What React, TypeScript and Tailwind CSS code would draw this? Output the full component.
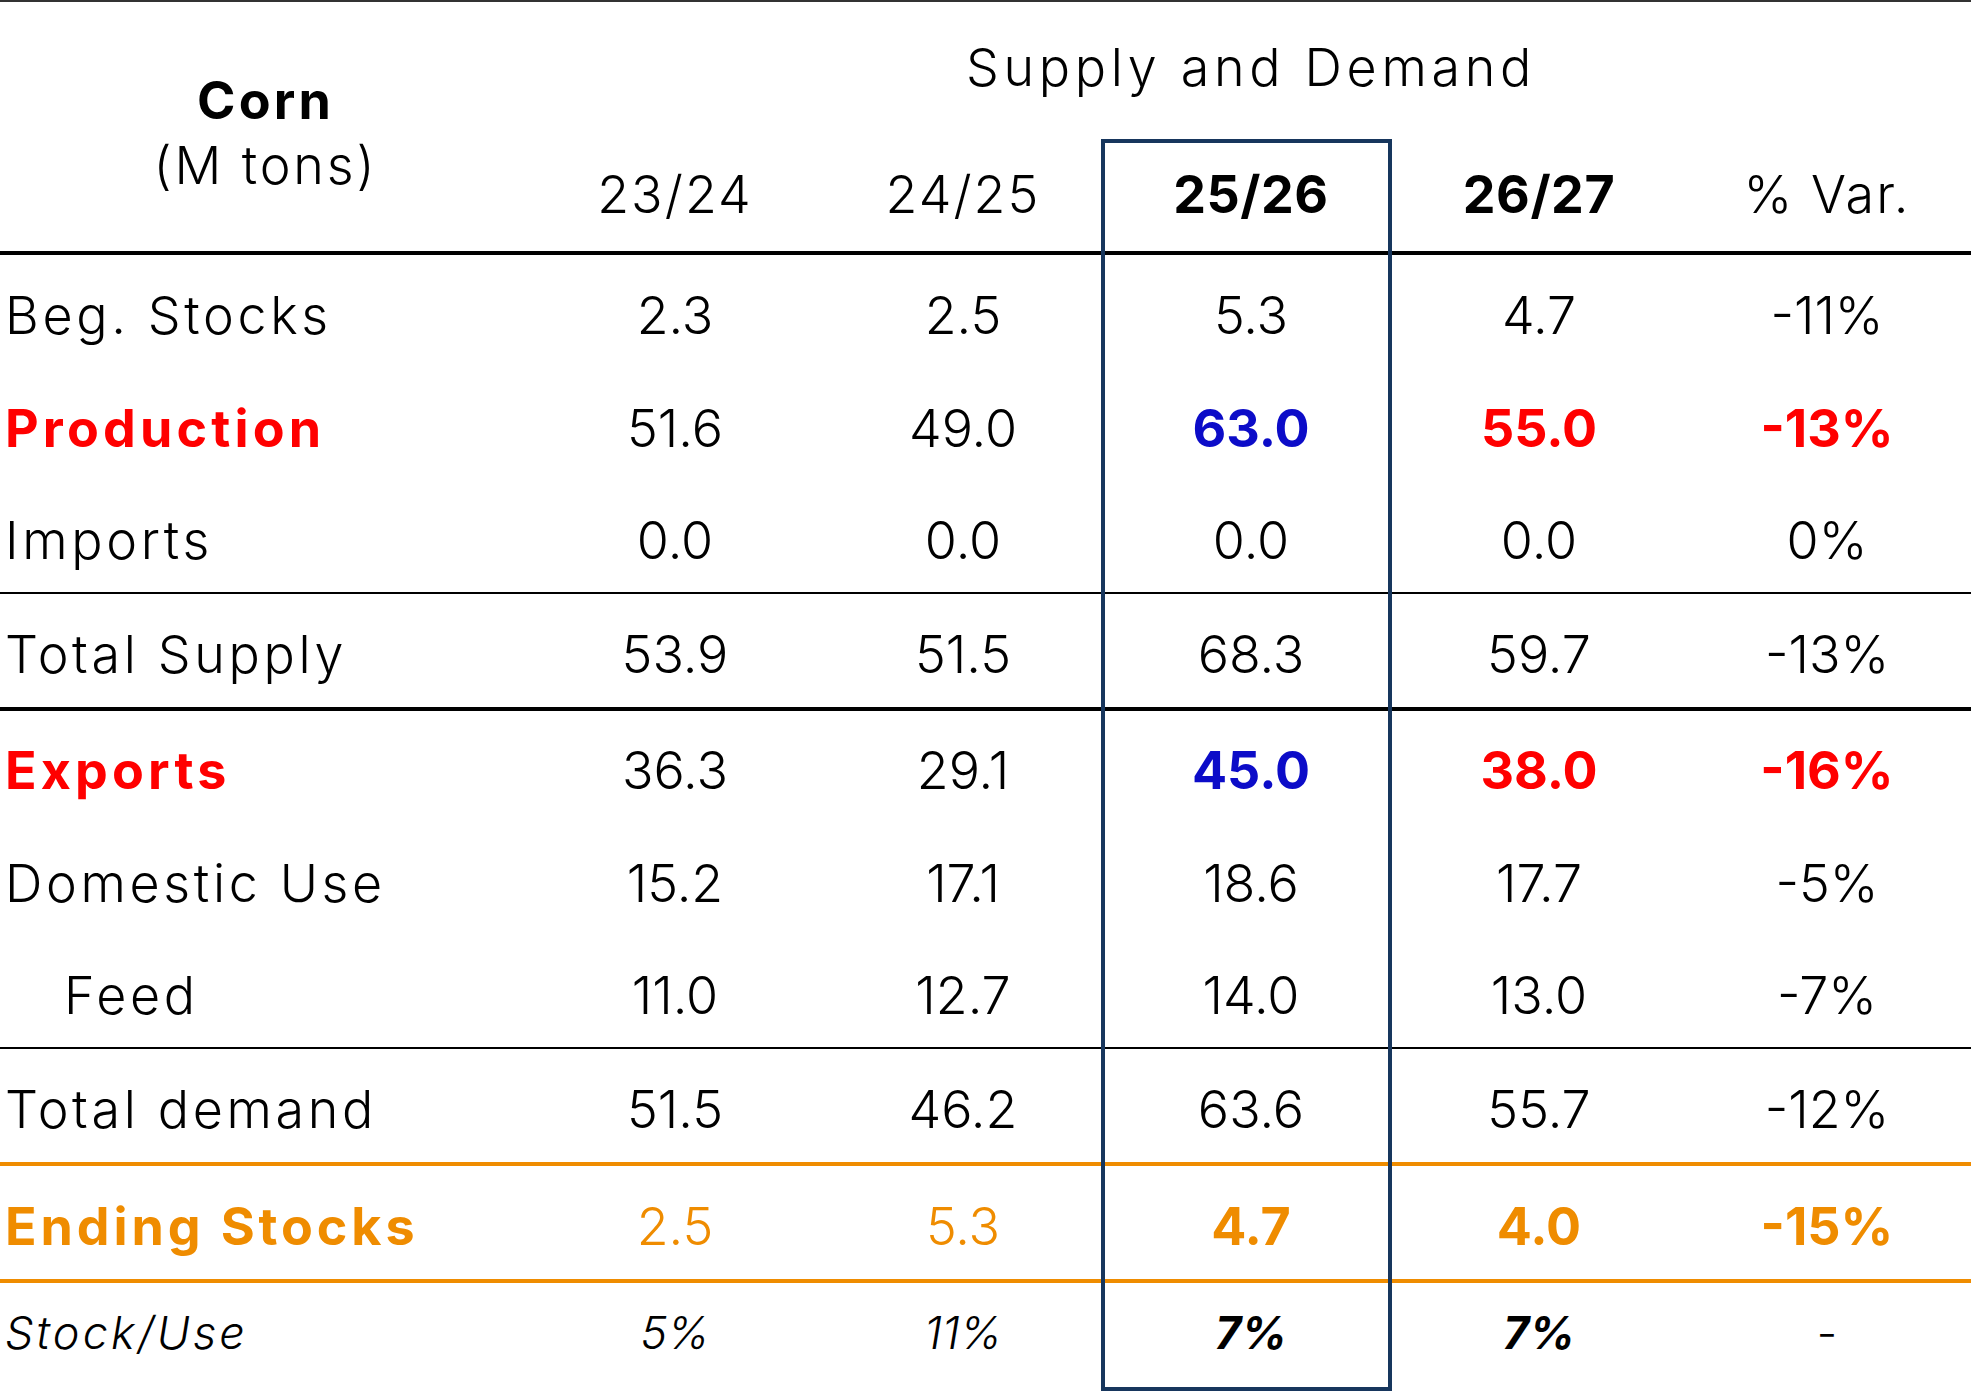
import React from "react";

type Tone = "plain" | "hot" | "ending" | "ratio";

const rows: {
  label: string;
  values: string[];
  tone: Tone;
  h: string;
  line?: string;
  indent?: boolean;
}[] = [
  { label: "Beg. Stocks", values: ["2.3", "2.5", "5.3", "4.7", "-11%"], tone: "plain", h: "h-[113px]" },
  { label: "Production", values: ["51.6", "49.0", "63.0", "55.0", "-13%"], tone: "hot", h: "h-[113px]" },
  { label: "Imports", values: ["0.0", "0.0", "0.0", "0.0", "0%"], tone: "plain", h: "h-[113px]", line: "border-b-2 border-black" },
  { label: "Total Supply", values: ["53.9", "51.5", "68.3", "59.7", "-13%"], tone: "plain", h: "h-[117px]", line: "border-b-4 border-black" },
  { label: "Exports", values: ["36.3", "29.1", "45.0", "38.0", "-16%"], tone: "hot", h: "h-[112px]" },
  { label: "Domestic Use", values: ["15.2", "17.1", "18.6", "17.7", "-5%"], tone: "plain", h: "h-[113px]" },
  { label: "Feed", values: ["11.0", "12.7", "14.0", "13.0", "-7%"], tone: "plain", h: "h-[113px]", line: "border-b-2 border-black", indent: true },
  { label: "Total demand", values: ["51.5", "46.2", "63.6", "55.7", "-12%"], tone: "plain", h: "h-[117px]", line: "border-b-4 border-[#ef8c00]" },
  { label: "Ending Stocks", values: ["2.5", "5.3", "4.7", "4.0", "-15%"], tone: "ending", h: "h-[117px]", line: "border-b-4 border-[#ef8c00]" },
  { label: "Stock/Use", values: ["5%", "11%", "7%", "7%", "-"], tone: "ratio", h: "h-[110px]" },
];

const years = [
  { text: "23/24", bold: false },
  { text: "24/25", bold: false },
  { text: "25/26", bold: true },
  { text: "26/27", bold: true },
  { text: "% Var.", bold: false },
];

function labelClass(tone: Tone) {
  if (tone === "hot") return "font-bold text-[#ff0000] tracking-[0.08em]";
  if (tone === "ending") return "font-bold text-[#ef8c00] tracking-[0.075em]";
  if (tone === "ratio") return "font-light italic text-[45px] text-black tracking-[0.07em]";
  return "font-light text-black tracking-[0.07em]";
}

function valueClass(tone: Tone, i: number) {
  if (tone === "hot") {
    if (i < 2) return "font-light text-black";
    if (i === 2) return "font-bold text-[#0c0cc8]";
    return "font-bold text-[#ff0000]";
  }
  if (tone === "ending") {
    return i < 2 ? "font-light text-[#ef8c00]" : "font-bold text-[#ef8c00]";
  }
  if (tone === "ratio") {
    if (i < 2) return "font-light italic text-[45px] text-black";
    if (i < 4) return "font-bold italic text-[45px] text-black";
    return "font-light text-[45px] text-black";
  }
  return "font-light text-black";
}

export default function App() {
  return (
    <div className="bg-white w-[1976px] h-[1393px] font-['Inter','Noto_Sans',sans-serif] text-[52px] leading-[60px] text-black">
      <div className="relative w-[1971px] border-t-2 border-[#333]">
        {/* header */}
        <div className="grid grid-cols-[531px_repeat(5,288px)] grid-rows-[137px_112px] border-b-4 border-black">
          <div className="row-span-2 flex flex-col items-center">
            <div className="mt-[69px] font-bold tracking-[0.06em]">Corn</div>
            <div className="mt-[5px] font-light tracking-[0.055em]">(M tons)</div>
          </div>
          <div className="col-span-5 flex justify-center pt-[36px] font-light tracking-[0.09em]">
            Supply and Demand
          </div>
          {years.map((y) => (
            <div
              key={y.text}
              className={`flex items-center justify-center ${
                y.bold ? "font-bold tracking-[0.01em]" : "font-light tracking-[0.04em]"
              }`}
            >
              {y.text}
            </div>
          ))}
        </div>

        {/* body */}
        {rows.map((r) => (
          <div
            key={r.label}
            className={`grid grid-cols-[531px_repeat(5,288px)] ${r.h} ${r.line ?? ""}`}
          >
            <div
              className={`flex items-center ${r.tone === "ratio" ? "pb-[10px]" : "pt-2"} ${
                r.indent ? "pl-[64px]" : "pl-[5px]"
              } ${labelClass(r.tone)}`}
            >
              {r.label}
            </div>
            {r.values.map((v, i) => (
              <div
                key={i}
                className={`flex items-center justify-center ${r.tone === "ratio" ? "pb-[10px]" : "pt-2"} ${valueClass(r.tone, i)}`}
              >
                {v}
              </div>
            ))}
          </div>
        ))}

        {/* highlight frame round the 25/26 column */}
        <div className="pointer-events-none absolute inset-0 grid grid-cols-[531px_repeat(5,288px)]">
          <div className="col-start-4 mt-[137px] mb-[2px] -ml-[6px] mr-[3px] border-4 border-[#17365d]" />
        </div>
      </div>
    </div>
  );
}
